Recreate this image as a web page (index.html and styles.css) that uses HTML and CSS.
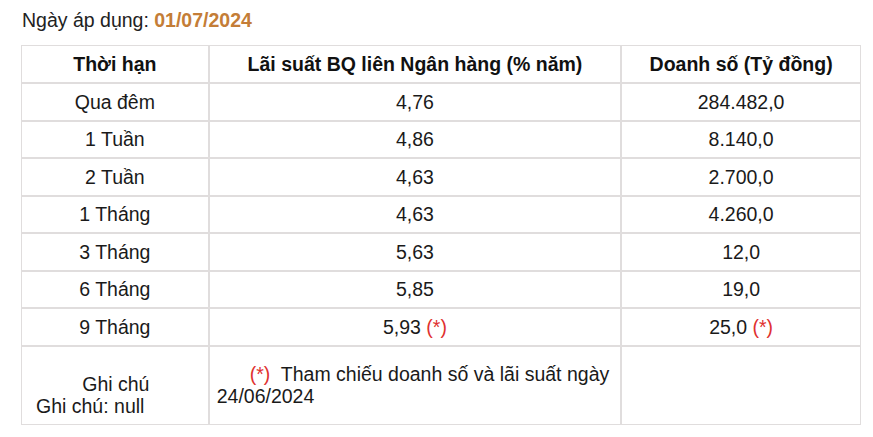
FILE: index.html
```html
<!DOCTYPE html>
<html lang="vi">
<head>
<meta charset="utf-8">
<link rel="stylesheet" href="styles.css">
</head>
<body>
<div class="page">
  <p class="date-line">Ngày áp dụng: <span class="date">01/07/2024</span></p>
  <table class="rates">
    <colgroup>
      <col class="c1"><col class="c2"><col class="c3">
    </colgroup>
    <tr class="head">
      <th>Thời hạn</th>
      <th>Lãi suất BQ liên Ngân hàng (% năm)</th>
      <th>Doanh số (Tỷ đồng)</th>
    </tr>
    <tr><td>Qua đêm</td><td>4,76</td><td>284.482,0</td></tr>
    <tr><td>1 Tuần</td><td>4,86</td><td>8.140,0</td></tr>
    <tr><td>2 Tuần</td><td>4,63</td><td>2.700,0</td></tr>
    <tr><td>1 Tháng</td><td>4,63</td><td>4.260,0</td></tr>
    <tr><td>3 Tháng</td><td>5,63</td><td>12,0</td></tr>
    <tr><td>6 Tháng</td><td>5,85</td><td>19,0</td></tr>
    <tr><td>9 Tháng</td><td>5,93 <span class="mark">(*)</span></td><td>25,0 <span class="mark">(*)</span></td></tr>
    <tr class="note">
      <td class="note-label"><div class="nl1">Ghi chú</div><div class="nl2">Ghi chú: null</div></td>
      <td class="note-text"><span class="indent"></span><span class="mark">(*)</span>&nbsp; Tham chiếu doanh số và lãi suất ngày<br>24/06/2024</td>
      <td></td>
    </tr>
  </table>
</div>
</body>
</html>
```
FILE: styles.css
```css
html, body {
  margin: 0;
  padding: 0;
  background: #ffffff;
}
body {
  font-family: "Liberation Sans", Arial, sans-serif;
  color: #1a1a1a;
  font-size: 19.5px;
}
.page {
  padding: 8px 13px 0 21px;
}
.date-line {
  margin: 0 0 12px 1px;
  font-size: 19.5px;
  line-height: 25px;
  color: #222;
}
.date {
  color: #c47d37;
  font-weight: bold;
}
.rates {
  border-collapse: collapse;
  width: 840px;
  border: 1px solid #e0dddd;
}
.c1 { width: 187px; }
.c2 { width: 412px; }
.c3 { width: 239px; }
.rates th,
.rates td {
  border: 2px solid #e0dddd;
  text-align: center;
  vertical-align: middle;
  padding: 0 7px;
  height: 35.5px;
  line-height: 22px;
  font-size: 19.5px;
}
.rates th {
  font-weight: bold;
  color: #111;
  height: 36px;
}
.rates tr > :first-child { border-left-width: 1px; }
.rates tr > :last-child { border-right-width: 1px; }
.rates tr:first-child > * { border-top-width: 1px; }
.rates tr:last-child > * { border-bottom-width: 1px; }
.mark {
  color: #e0312f;
}
.rates .note td {
  height: 57px;
}
.rates .note-label {
  padding-top: 20px;
}
.nl1 {
  text-align: center;
  padding-left: 2px;
}
.nl2 {
  text-align: left;
  padding-left: 7px;
}
.rates .note-text {
  text-align: left;
}
.indent {
  display: inline-block;
  width: 33px;
}
```
